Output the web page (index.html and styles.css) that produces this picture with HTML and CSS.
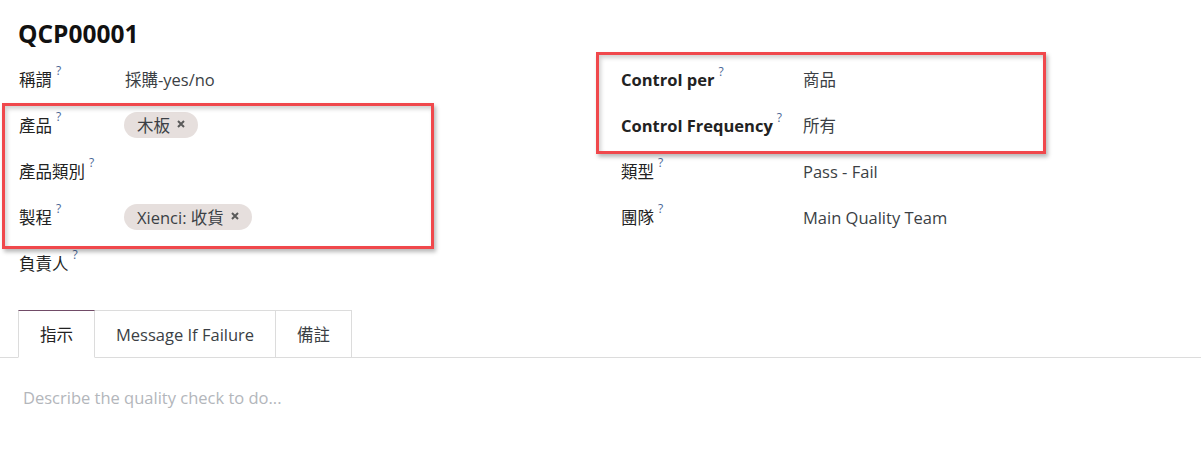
FILE: index.html
```html
<!DOCTYPE html>
<html>
<head>
<meta charset="utf-8">
<link rel="stylesheet" href="styles.css">
</head>
<body>
<div class="sheet">
  <h1 class="title">QCP00001</h1>
  <div class="groups">
    <div class="group group-left">
      <div class="row"><div class="label">稱謂<sup>?</sup></div><div class="value">採購-yes/no</div></div>
      <div class="row"><div class="label">產品<sup>?</sup></div><div class="value"><span class="tag">木板<svg class="x" viewBox="0 0 8 8"><path d="M1 1L7 7M7 1L1 7"/></svg></span></div></div>
      <div class="row"><div class="label">產品類別<sup>?</sup></div><div class="value"></div></div>
      <div class="row"><div class="label">製程<sup>?</sup></div><div class="value"><span class="tag">Xienci: 收貨<svg class="x" viewBox="0 0 8 8"><path d="M1 1L7 7M7 1L1 7"/></svg></span></div></div>
      <div class="row"><div class="label">負責人<sup>?</sup></div><div class="value"></div></div>
    </div>
    <div class="group group-right">
      <div class="row"><div class="label bold">Control per<sup>?</sup></div><div class="value">商品</div></div>
      <div class="row"><div class="label bold">Control Frequency<sup>?</sup></div><div class="value">所有</div></div>
      <div class="row"><div class="label">類型<sup>?</sup></div><div class="value">Pass - Fail</div></div>
      <div class="row"><div class="label">團隊<sup>?</sup></div><div class="value">Main Quality Team</div></div>
    </div>
  </div>
  <div class="tabs">
    <div class="tab active">指示</div>
    <div class="tab">Message If Failure</div>
    <div class="tab">備註</div>
  </div>
  <div class="editor">Describe the quality check to do...</div>
  <div class="mark mark-left"></div>
  <div class="mark mark-right"></div>
</div>
</body>
</html>
```
FILE: styles.css
```css
* { box-sizing: border-box; }
html, body { margin: 0; padding: 0; background: #fff; }
body {
  font-family: "Open Sans", "Noto Sans CJK TC", sans-serif;
  font-size: 16.5px;
  color: #212529;
  width: 1201px;
  height: 475px;
  overflow: hidden;
}
.sheet { position: relative; padding-top: 18px; }
.title {
  margin: 0 0 0 18px;
  font-size: 24.5px;
  font-weight: 700;
  line-height: 32px;
  height: 38px;
  color: #111;
}
.groups {
  display: grid;
  grid-template-columns: 602px 1fr;
  padding-left: 19px;
}
.row {
  display: flex;
  align-items: center;
  height: 46px;
}
.group-left .label { width: 106px; }
.group-right .label { width: 182px; }
.label { color: #222; }
.label.bold { font-weight: 700; }
sup {
  font-size: 12px;
  color: #4a6796;
  margin-left: 4px;
  vertical-align: top;
  position: relative;
  top: -5px;
  font-weight: 400;
}
.value { color: #3b3f45; }
.tag {
  display: inline-flex;
  align-items: center;
  height: 26px;
  padding: 0 13px 0 13px;
  border-radius: 13px;
  background: #e6dfdd;
  color: #3b3f45;
  margin-left: -1px;
}
.x {
  width: 8px;
  height: 8px;
  margin-left: 7px;
  margin-top: -3px;
  stroke: #5a5a5a;
  stroke-width: 2;
  fill: none;
}
.tabs {
  display: flex;
  margin-top: 24px;
  padding-left: 18px;
  border-bottom: 1px solid #dcdcdc;
  height: 48px;
}
.tab {
  height: 48px;
  padding: 0 21px;
  display: flex;
  align-items: center;
  border: 1px solid #dcdcdc;
  border-left: 0;
  color: #3b3f45;
  background: #fff;
}
.tab.active {
  border-left: 1px solid #dcdcdc;
  border-top: 1px solid #714b67;
  border-bottom-color: #fff;
  color: #222;
}
.editor {
  padding: 28px 0 0 23px;
  color: #b3b6bb;
}
.mark {
  position: absolute;
  border: 3px solid #f0484c;
  box-shadow: 2px 3px 4px rgba(0,0,0,0.28), inset 2px 3px 4px rgba(0,0,0,0.18);
}
.mark-left { left: 2px; top: 103px; width: 432px; height: 146px; }
.mark-right { left: 596px; top: 52px; width: 450px; height: 102px; }
```
